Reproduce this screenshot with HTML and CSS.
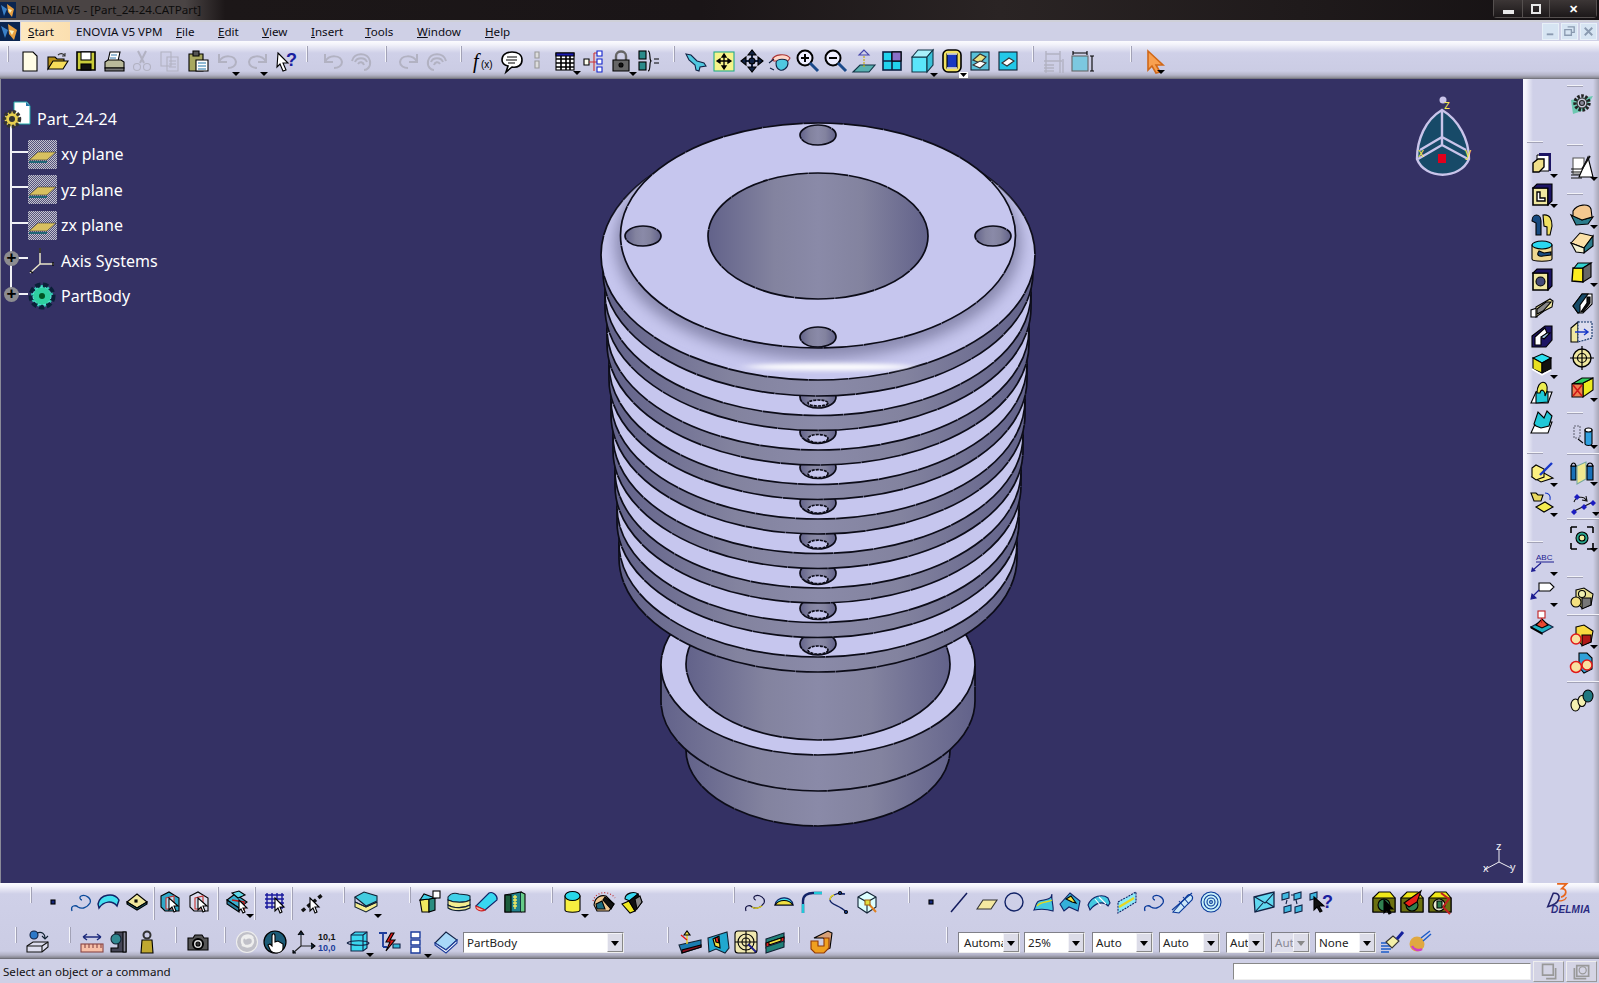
FILE: index.html
```html
<!DOCTYPE html>
<html lang="en">
<head>
<meta charset="utf-8">
<title>DELMIA V5 - [Part_24-24.CATPart]</title>
<link rel="stylesheet" href="styles.css">
</head>
<body>
<header class="titlebar">
  <svg class="appicon" viewBox="0 0 16 16"><rect width="16" height="16" fill="#0b2550"/><path d="M7 2l7 5-2 8-4-5z" fill="#e8a040" stroke="none"/><path d="M1 3l6 4-3 7z" fill="#3a80c8" stroke="none"/><path d="M8 7l4 1-2 3z" fill="#f8f0c0"/></svg>
  <span class="titlegloss">DELMIA V5 - [Part_24-24.CATPart]</span>
  <div class="winbtns">
    <span class="wb wbmin"><i></i></span>
    <span class="wb wbmax"><i></i></span>
    <span class="wb wbclose">✕</span>
  </div>
</header>
<nav class="menubar">
  <svg class="menuicon" viewBox="0 0 20 19"><rect width="20" height="19" fill="#0b2550"/><path d="M8 2l9 6-3 10-5-6z" fill="#e8a040" stroke="none"/><path d="M1 4l7 4-3 8z" fill="#3a80c8" stroke="none"/><path d="M9 8l5 1-2 4z" fill="#f8f0c0"/></svg>
  <span class="mi mstart"><u>S</u>tart</span>
  <span class="mi menovia">ENOVIA V5 VPM</span>
  <span class="mi mfile"><u>F</u>ile</span>
  <span class="mi medit"><u>E</u>dit</span>
  <span class="mi mview"><u>V</u>iew</span>
  <span class="mi minsert"><u>I</u>nsert</span>
  <span class="mi mtools"><u>T</u>ools</span>
  <span class="mi mwindow"><u>W</u>indow</span>
  <span class="mi mhelp"><u>H</u>elp</span>
  <div class="mdibtns">
    <span class="mdib"><svg viewBox="0 0 16 16"><path d="M4 11h7" stroke="#8a9ab0" stroke-width="2"/></svg></span>
    <span class="mdib"><svg viewBox="0 0 16 16"><path d="M6 3h7v6h-3M3 6h7v6H3z" stroke="#8a9ab0" stroke-width="1.400" fill="none"/></svg></span>
    <span class="mdib"><svg viewBox="0 0 16 16"><path d="M4 4l8 8M12 4l-8 8" stroke="#8a9ab0" stroke-width="2"/></svg></span>
  </div>
</nav>
<section class="toolbar-top">
  <i class="sep l0 r7"></i>
  <svg class="ic" viewBox="0 0 24 24"><path fill="#fffce6" d="M5 3h10l4 4v15H5z"/></svg>
  <svg class="ic" viewBox="0 0 24 24"><path fill="#b8921a" d="M2 20V8h7l2 2h7v3H7z"/><path fill="#f5dc5a" d="M2 20l5-8h15l-5 8z"/><path d="M12 6c2-2 5-2 7 1m0-3v3h-3" stroke="#333"/></svg>
  <svg class="ic" viewBox="0 0 24 24"><path fill="#c9cc3a" stroke-width="1.600" d="M3 3h18v18H3z"/><rect x="7" y="3" width="10" height="8" fill="#fff"/><rect x="7" y="15" width="10" height="6" fill="#111"/></svg>
  <svg class="ic" viewBox="0 0 24 24"><path fill="#fff" d="M8 3h10l-2 9H6z"/><path fill="#b9b99a" d="M3 13l3-2h13l3 2v6H3z"/><path fill="#777" d="M3 19h19v3H3z"/><path d="M9 6h6M8 9h6" stroke="#37a"/></svg>
  <svg class="ic dis" viewBox="0 0 24 24"><path d="M8 2l6 12M16 2l-6 12" stroke-width="2"/><circle cx="7" cy="18" r="3.500"/><circle cx="17" cy="18" r="3.500"/></svg>
  <svg class="ic dis" viewBox="0 0 24 24"><path d="M3 3h10v14H3z"/><path d="M9 8h11v14H9z"/><path d="M11 12h7M11 15h7M11 18h7"/></svg>
  <svg class="ic" viewBox="0 0 24 24"><path fill="#a8a860" d="M3 5h14v17H3z"/><path fill="#555" d="M7 2h6v5H7z"/><path fill="#fff" d="M10 11h12v11H10z"/><path d="M12 14h8M12 17h8M12 20h8" stroke="#27a"/></svg>
  <svg class="ic dis x1" viewBox="0 0 24 24"><path d="M4 5v8h8M4 13C8 5 20 6 21 13c0 4-4 6-8 6" stroke-width="2"/><path class="ar" d="M17 23h8l-4 4z"/></svg>
  <svg class="ic dis x3" viewBox="0 0 24 24"><path d="M20 5v8h-8M20 13C16 5 4 6 3 13c0 4 4 6 8 6" stroke-width="2"/><path class="ar" d="M14 23h8l-4 4z"/></svg>
  <svg class="ic" viewBox="0 0 24 24"><path fill="#fff" stroke="#000" d="M3 4l10 10H8l3 7-3 1-3-7-3 3z" transform="translate(1 0)"/><text class="qm" x="12" y="17">?</text></svg>
  <i class="sep l6 r11"></i>
  <svg class="ic dis" viewBox="0 0 24 24"><path d="M4 5v8h8M4 13C8 5 20 6 21 13c0 4-4 6-8 6" stroke-width="2"/></svg>
  <svg class="ic dis" viewBox="0 0 24 24"><path d="M3 12C5 3 19 3 21 12c1 6-3 9-6 9M6 13c2-5 10-5 12 0M9 15c2-3 5-2 6 1" stroke-width="2"/></svg>
  <i class="sep l10 r8"></i>
  <svg class="ic dis" viewBox="0 0 24 24"><path d="M20 5v8h-8M20 13C16 5 4 6 3 13c0 4 4 6 8 6" stroke-width="2"/></svg>
  <svg class="ic dis" viewBox="0 0 24 24"><path d="M21 12C19 3 5 3 3 12c-1 6 3 9 6 9M18 13c-2-5-10-5-12 0M15 15c-2-3-5-2-6 1" stroke-width="2"/></svg>
  <i class="sep l9 r8"></i>
  <svg class="ic" viewBox="0 0 24 24"><text class="fx" x="1" y="19">f</text><text class="fxs" x="9" y="19">(x)</text></svg>
  <svg class="ic" viewBox="0 0 24 24"><path fill="#fff" stroke-width="1.600" d="M12 3c6 0 10 3 10 8s-4 8-10 7l-6 5 2-6c-4-1-6-3-6-6 0-5 4-8 10-8z"/><path d="M7 8h10M6 11h11M8 14h7"/></svg>
  <svg class="ic x-3" viewBox="0 0 24 24"><path stroke="#999" fill="#ddd" d="M10 3h4v6h-4zM10 12h4v7h-4z"/></svg>
  <svg class="ic" viewBox="0 0 24 24"><rect x="3" y="4" width="18" height="17" fill="#fff"/><path d="M3 4h18v3H3z" fill="#1a1ab0"/><path d="M3 10h18M3 14h18M3 18h18M8 7v14M13 7v14M17 7v14" stroke-width="1.600"/><path class="ar" d="M20 22h8l-4 4z"/></svg>
  <svg class="ic" viewBox="0 0 24 24"><path d="M3 10h5v6H3z" fill="#ffe"/><path d="M8 13h5M13 4v18M13 4h3M13 13h3M13 22h0" stroke="#c33"/><g fill="#fff" stroke="#12c"><path d="M16 2h5v5h-5zM16 10h5v5h-5zM16 18h5v5h-5z"/></g></svg>
  <svg class="ic" viewBox="0 0 24 24"><path d="M7 11V7c0-6 10-6 10 0v4" stroke="#666" stroke-width="2.400"/><path fill="#666" d="M4 11h16v11H4z"/><circle cx="12" cy="16" r="2" fill="#111"/><path class="ar" d="M20 23h8l-4 4z"/></svg>
  <svg class="ic" viewBox="0 0 24 24"><rect x="2" y="2" width="7" height="8" fill="#2a8a8a"/><rect x="2" y="13" width="7" height="8" fill="#2a8a8a"/><path d="M11 2c3 0 1 9 3 10-2 1 0 10-3 10M17 10h5M17 14h5"/></svg>
  <i class="sep l10 r7"></i>
  <svg class="ic" viewBox="0 0 24 24"><path fill="#4fc8e0" stroke="#124" d="M2 5l5 1 6 6 7 2 2 3-6 1-1 4-3-1-1-5-6-5z"/></svg>
  <svg class="ic" viewBox="0 0 24 24"><rect x="2" y="3" width="20" height="19" fill="#f6f38a" stroke="#2a8"/><path d="M12 5v15M5 12h14M12 5l-2 3h4zM12 20l-2-3h4zM5 12l3-2v4zM19 12l-3-2v4z" stroke-width="1.300" fill="#000"/></svg>
  <svg class="ic" viewBox="0 0 24 24"><path d="M12 1v22M1 12h22" stroke="#124" stroke-width="2"/><path fill="#124" d="M12 1l-4 5h8zM12 23l-4-5h8zM1 12l5-4v8zM23 12l-5-4v8z"/><circle cx="12" cy="12" r="3" fill="#124"/></svg>
  <svg class="ic" viewBox="0 0 24 24"><path fill="#ffd6c8" stroke="#a33" d="M4 11c2-6 14-7 18-2l-2 3H6z"/><path fill="#4fc8e0" d="M8 14c0-5 12-5 12 0 0 5-5 8-8 7-3-1-4-4-4-7z" stroke="#124"/><path d="M1 14l5-4M2 19l4 2" stroke="#124"/></svg>
  <svg class="ic" viewBox="0 0 24 24"><circle cx="9" cy="9" r="7.500" fill="#eef" stroke-width="2"/><path d="M14 14l8 8" stroke="#1a4a8a" stroke-width="3"/><path d="M5 9h8M9 5v8" stroke-width="2"/></svg>
  <svg class="ic" viewBox="0 0 24 24"><circle cx="9" cy="9" r="7.500" fill="#eef" stroke-width="2"/><path d="M14 14l8 8" stroke="#1a4a8a" stroke-width="3"/><path d="M5 9h8" stroke-width="2"/></svg>
  <svg class="ic" viewBox="0 0 24 24"><path fill="#58b0b0" stroke="#134" d="M1 23l7-7h15l-6 7z"/><path d="M12 18V6" stroke="#c8b000" stroke-dasharray="2 1"/><path d="M12 1l-5 5h10z" fill="#cfd0e8" stroke="#44a"/></svg>
  <svg class="ic" viewBox="0 0 24 24"><rect x="3" y="3" width="18" height="18" fill="#22d4ee" stroke="#124" stroke-width="1.600"/><path d="M12 3v18M3 12h18" stroke="#124" stroke-width="1.600"/><rect x="12" y="3" width="9" height="9" fill="#8a70c8"/></svg>
  <svg class="ic x2" viewBox="0 0 24 24"><path fill="#5be6fa" stroke="#134" d="M2 8h15v15H2z"/><path fill="#a8f0fa" stroke="#134" d="M2 8l6-7h15l-6 7z"/><path fill="#38c0d8" stroke="#134" d="M17 8l6-7v15l-6 7z"/><path class="ar" d="M20 24h8l-4 4z"/></svg>
  <svg class="ic x2" viewBox="0 0 24 24"><rect x="3" y="1" width="18" height="22" rx="5" fill="#f0e060" stroke-width="1.600"/><rect x="7" y="5" width="10" height="14" fill="#1838c0"/><path d="M7 5h10M7 19h10" stroke="#eee" stroke-width="1.400"/><rect class="ar-bg" x="19" y="23" width="9" height="6"/><path class="ar" d="M20 24h7l-3.500 4z"/></svg>
  <svg class="ic" viewBox="0 0 24 24"><rect x="3" y="3" width="18" height="18" fill="#58c0d8" stroke="#123"/><path d="M5 11l7-6 6 3-6 6z" fill="#e8e080" stroke="#333"/><path d="M5 16l7-4 6 2-6 5z" fill="#fff" stroke="#333"/></svg>
  <svg class="ic" viewBox="0 0 24 24"><rect x="3" y="3" width="18" height="18" fill="#22c8e8" stroke="#123"/><path d="M6 14l7-5 5 3-7 5z" fill="#fff" stroke="#333"/></svg>
  <i class="sep l10 r6"></i>
  <svg class="ic dis" viewBox="0 0 24 24"><path d="M4 2v22M18 2v22M4 5h14M2 12h18M2 16h10M2 19h10M2 22h10M21 10v14" stroke-width="1.400"/></svg>
  <svg class="ic" viewBox="0 0 24 24"><path d="M3 2v4M17 2v4M3 4h14" /><rect x="2" y="7" width="16" height="15" fill="#7cc8e0" stroke="#666"/><path d="M22 7v15M20 7h4M20 22h4"/></svg>
  <i class="sep l34 r9"></i>
  <svg class="ic" viewBox="0 0 24 24"><path fill="#f8a050" stroke="#d06818" stroke-width="1.600" d="M5 2l15 14h-7l4 7-4 1-4-7-4 4z"/><path class="ar" d="M14 21h8l-4 4z"/></svg>
</section>
<div class="workarea">
  <main class="viewport">
    <svg class="model" viewBox="0 79 1523 804">
      <defs>
        <linearGradient id="wall"><stop offset="0" stop-color="#62628a"/><stop offset=".3" stop-color="#83839f"/><stop offset=".5" stop-color="#8a8aa8"/><stop offset=".7" stop-color="#83839f"/><stop offset="1" stop-color="#62628a"/></linearGradient>
        <clipPath id="filclip"><ellipse cx="818" cy="255" rx="217" ry="125"/></clipPath>
        <filter id="blur" x="-30%" y="-200%" width="160%" height="500%"><feGaussianBlur stdDeviation="8 2"/></filter>
        <filter id="shade" x="-10%" y="-10%" width="120%" height="120%"><feGaussianBlur stdDeviation="7"/></filter>
        <pattern id="chk" width="2" height="2" patternUnits="userSpaceOnUse"><rect width="2" height="2" fill="#c4c4ce"/><rect width="1" height="1" fill="#54527c"/><rect x="1" y="1" width="1" height="1" fill="#54527c"/></pattern>
      </defs>
      <g class="edges">
        <path class="w" d="M686 750a132 76 0 0 0 264 0V720H686z"/>
        <path class="w" d="M661 665v36a157 90 0 0 0 314 0V665z"/>
        <ellipse class="lt" cx="818" cy="665" rx="157" ry="90"/>
        <ellipse class="w" cx="818" cy="664" rx="132" ry="76"/>

        <path class="w" d="M619 543v15a199 114 0 0 0 398 0v-15z"/><ellipse class="lt" cx="818" cy="543" rx="199" ry="114"/>
        <ellipse class="w" cx="818" cy="643.800" rx="18" ry="11"/><ellipse class="lt dash" cx="818" cy="650" rx="10" ry="4"/>
        <path class="w" d="M617 507v15a201 115.500 0 0 0 402 0v-15z"/><ellipse class="lt" cx="818" cy="507" rx="201" ry="115.500"/>
        <ellipse class="w" cx="818" cy="608.500" rx="18" ry="11"/><ellipse class="lt dash" cx="818" cy="614.700" rx="10" ry="4"/>
        <path class="w" d="M615 471v15a203 117 0 0 0 406 0v-15z"/><ellipse class="lt" cx="818" cy="471" rx="203" ry="117"/>
        <ellipse class="w" cx="818" cy="573.300" rx="18" ry="11"/><ellipse class="lt dash" cx="818" cy="579.500" rx="10" ry="4"/>
        <path class="w" d="M613 435.500v15a205 118 0 0 0 410 0v-15z"/><ellipse class="lt" cx="818" cy="435.500" rx="205" ry="118"/>
        <ellipse class="w" cx="818" cy="538" rx="18" ry="11"/><ellipse class="lt dash" cx="818" cy="544.200" rx="10" ry="4"/>
        <path class="w" d="M611 400v15a207 119 0 0 0 414 0v-15z"/><ellipse class="lt" cx="818" cy="400" rx="207" ry="119"/>
        <ellipse class="w" cx="818" cy="502.800" rx="18" ry="11"/><ellipse class="lt dash" cx="818" cy="509" rx="10" ry="4"/>
        <path class="w" d="M609 364.500v15a209 120 0 0 0 418 0v-15z"/><ellipse class="lt" cx="818" cy="364.500" rx="209" ry="120"/>
        <ellipse class="w" cx="818" cy="467.500" rx="18" ry="11"/><ellipse class="lt dash" cx="818" cy="473.700" rx="10" ry="4"/>
        <path class="w" d="M607 329v15a211 121 0 0 0 422 0v-15z"/><ellipse class="lt" cx="818" cy="329" rx="211" ry="121"/>
        <ellipse class="w" cx="818" cy="432.300" rx="18" ry="11"/><ellipse class="lt dash" cx="818" cy="438.500" rx="10" ry="4"/>
        <path class="w" d="M605 293v15a213 122.500 0 0 0 426 0v-15z"/><ellipse class="lt" cx="818" cy="293" rx="213" ry="122.500"/>
        <ellipse class="w" cx="818" cy="397" rx="18" ry="11"/><ellipse class="lt dash" cx="818" cy="403" rx="10" ry="3"/>
        <path class="w" d="M603 257v15a215 124 0 0 0 430 0v-15z"/>

        <ellipse class="lt" cx="818" cy="255" rx="217" ry="125"/>
        <g clip-path="url(#filclip)" class="nostroke">
          <ellipse class="shade" cx="818" cy="243" rx="203" ry="116" filter="url(#shade)"/>
          <ellipse class="hl" cx="830" cy="367" rx="85" ry="3.500" filter="url(#blur)"/>
        </g>
        <ellipse class="lt" cx="818" cy="235.500" rx="197.500" ry="112.500"/>
        <ellipse class="w" cx="818" cy="236" rx="110" ry="63"/>
        <ellipse class="w" cx="818" cy="135" rx="18" ry="10"/>
        <ellipse class="w" cx="818" cy="337" rx="18" ry="10"/>
        <ellipse class="w" cx="643" cy="236" rx="18" ry="10"/>
        <ellipse class="w" cx="993" cy="236" rx="18" ry="10"/>
      </g>
      <g class="compass">
        <path class="cfill" d="M1442 110C1425 120 1417 140 1417 159 1425 180 1460 180 1469 159 1469 140 1459 120 1442 110z"/>
        <path d="M1442 110V145M1442 137L1420 150M1442 137L1466 150M1442 145L1418 159M1442 145L1468 159"/>
        <circle class="cball" cx="1443" cy="100" r="3.500"/>
        <rect class="cred" x="1438" y="154" width="8" height="9"/>
        <text class="clabel" x="1444" y="109">z</text>
        <text class="clabel" x="1418" y="157">x</text>
        <text class="clabel" x="1465" y="157">y</text>
      </g>
      <g class="triad">
        <path d="M1499 850V862L1484 870M1499 862L1511 868"/>
        <text x="1496" y="850">z</text><text x="1483" y="872">x</text><text x="1510" y="871">y</text>
      </g>
    </svg>
    <ul class="tree">
      <li class="node root">
        <svg class="rooticon" viewBox="0 0 30 30"><path d="M10 1h13l3 4v18H10z" fill="#fff" stroke="#2aa"/><path d="M22 1l4 4h-4z" fill="#27a"/><circle cx="8" cy="18" r="7.500" fill="#e8d050" stroke="#333" stroke-dasharray="3 1.500" stroke-width="3.500"/><circle cx="8" cy="18" r="3" fill="#333"/></svg>
        <span>Part_24-24</span>
      </li>
      <li class="node child">
        <svg class="planeicon" viewBox="0 0 29 29"><rect width="29" height="29" class="chk"/><path d="M1 20l9-8h18l-9 8z" fill="#d8c060" stroke="#333" stroke-width=".6"/><path d="M1 22h18" stroke="#267" stroke-width="2"/></svg>
        <span>xy plane</span>
      </li>
      <li class="node child">
        <svg class="planeicon" viewBox="0 0 29 29"><rect width="29" height="29" class="chk"/><path d="M1 20l9-8h18l-9 8z" fill="#d8c060" stroke="#333" stroke-width=".6"/><path d="M1 22h18" stroke="#267" stroke-width="2"/></svg>
        <span>yz plane</span>
      </li>
      <li class="node child">
        <svg class="planeicon" viewBox="0 0 29 29"><rect width="29" height="29" class="chk"/><path d="M1 20l9-8h18l-9 8z" fill="#d8c060" stroke="#333" stroke-width=".6"/><path d="M1 22h18" stroke="#267" stroke-width="2"/></svg>
        <span>zx plane</span>
      </li>
      <li class="node child exp">
        <svg class="planeicon" viewBox="0 0 29 29"><path d="M12 2V18L2 27M12 18H26" stroke="#e8e4c8" stroke-width="1.500" fill="none"/><path d="M12 2v5M25 16v4M2 25l3 2" stroke="#111" stroke-width="1.500"/></svg>
        <span>Axis Systems</span>
      </li>
      <li class="node child exp">
        <svg class="planeicon" viewBox="0 0 29 29"><circle cx="14" cy="14" r="11" fill="#32c8b4" stroke="#0a2038" stroke-width="5" stroke-dasharray="5 2.500"/><circle cx="14" cy="14" r="9" fill="#2fd0a0" stroke="#68e8e8" stroke-dasharray="3 2"/><circle cx="14" cy="14" r="3" fill="#052"/></svg>
        <span>PartBody</span>
      </li>
    </ul>
  </main>
  <aside class="rightbar">
    <div class="rcol rc1">
      <i class="hsep t62"></i>
      <svg class="ic t9" viewBox="0 0 24 24"><path fill="#fff" stroke-width="1" d="M7 3h12v16H7z"/><path fill="#1c1464" stroke="none" d="M9 1h12v18h-2V4H9z"/><path fill="#f0e08a" stroke-width="1.400" d="M3 11l5-4h6v8l-5 5H3z"/><path class="ar" d="M20 22h8l-4 4z"/></svg>
      <svg class="ic t6" viewBox="0 0 24 24"><path fill="#f0e8a0" stroke="#000" stroke-width="1.600" d="M3 6h15v17H3z"/><path fill="#1c1464" d="M3 6l4-4h15v17l-4 4V6z"/><path fill="#fff" stroke="#000" stroke-width="1.400" d="M7 10h3v6h5v3H7z"/><path class="ar" d="M20 22h8l-4 4z"/></svg>
      <svg class="ic t6" viewBox="0 0 24 24"><path fill="#164a80" stroke="#000" d="M2 9c0-8 9-8 9 0v14H6V11z"/><path fill="#f0e060" stroke="#000" d="M13 3c8-1 9 6 9 11l-2 9h-3v-8l-3-1z"/></svg>
      <svg class="ic t3" viewBox="0 0 24 24"><path fill="#f0d890" stroke="#000" d="M2 6v14c0 3 20 3 20 0V6z"/><ellipse cx="12" cy="6" rx="10" ry="4" fill="#2ad8f0" stroke="#000"/><path fill="#184a80" d="M9 12c-3 4 0 6 4 5l8-1v-3l-7 1z"/></svg>
      <svg class="ic t4" viewBox="0 0 24 24"><path fill="#f0e8a0" stroke="#000" stroke-width="1.600" d="M3 6h15v17H3z"/><path fill="#1c1464" d="M3 6l4-4h15v17l-4 4V6z"/><circle cx="10.500" cy="14.500" r="4.500" fill="#444a78" stroke="#000"/></svg>
      <svg class="ic t4" viewBox="0 0 24 24"><path fill="#fff" stroke="#000" d="M1 22v-7l6-2v9z"/><path fill="#f0e8a0" stroke="#000" d="M6 12L20 4l3 2-1 6-8 4-8 6z"/><path fill="#888" d="M7 14l9-7 5 0-8 9-6 3z"/></svg>
      <svg class="ic t5" viewBox="0 0 24 24"><path fill="#1c1464" stroke="#000" d="M2 12L15 2h7v14l-6 7H2z"/><path fill="#fff" stroke="#000" d="M5 13L15 4l2 5-6 5v7H5z"/><path fill="#a0c8e0" d="M11 13l6-4 3 0-6 6z"/></svg>
      <svg class="ic t4" viewBox="0 0 24 24"><path fill="#2ae0f0" stroke="#000" d="M12 2l9 4-9 5-9-5z"/><path fill="#e8e020" stroke="#000" d="M3 6l9 5v10l-9-4z"/><path fill="#111" d="M21 6l-9 5v10l9-4z"/><path d="M2 17l10 6 9-5" stroke="#fff" stroke-width="1.500"/><path class="ar" d="M20 23h8l-4 4z"/></svg>
      <svg class="ic t4" viewBox="0 0 24 24"><path fill="#fff" stroke="#000" d="M1 23l5-11h16l-4 11z"/><path fill="#20c8d8" stroke="#000" d="M6 12l5-2 7 2v10l-12 1z"/><path fill="#ecec50" stroke="#000" d="M7 13c0-14 12-14 10-2l-2 5c0-6-4-8-5-3z"/></svg>
      <svg class="ic t6" viewBox="0 0 24 24"><path fill="#fff" stroke="#000" d="M1 23l5-11h16l-4 11z"/><path fill="#20c8d8" stroke="#000" d="M4 14l4-12 6 6 3-7 5 5-3 10-8 2-5-2z"/></svg>
      <i class="hsep t18"></i>
      <svg class="ic t6" viewBox="0 0 24 24"><path fill="#fcf080" stroke="#000" d="M2 17l12-4 9 5-12 4z"/><path fill="#fcf080" stroke="#000" d="M2 8l4-3 8 4v8l-8 3-4-3z"/><path d="M10 15L22 3" stroke="#1838c8" stroke-width="2.400"/><path class="ar" d="M20 23h8l-4 4z"/></svg>
      <svg class="ic t6" viewBox="0 0 24 24"><path fill="#e8d860" stroke="#000" d="M1 3h5l2 2h5l-2 6H4z"/><path fill="#f4ec50" stroke="#000" d="M6 17l9-5 8 5-9 5z"/><path d="M15 3c4 0 6 3 5 7" stroke="#1838c8"/><path class="ar" d="M20 23h8l-4 4z"/></svg>
      <i class="hsep t27"></i>
      <svg class="ic t7" viewBox="0 0 24 24"><text class="abc" x="6" y="10">ABC</text><path d="M6 12h18M11 13l-8 7" stroke="#1c1c90"/><path d="M1 22l1-5 4 4z" fill="#1c1c90" stroke="none"/><path class="ar" d="M20 22h8l-4 4z"/></svg>
      <svg class="ic t6" viewBox="0 0 24 24"><path fill="#fff" stroke="#000" d="M9 3h11l4 4-4 4H9z"/><path d="M9 10l-6 6M1 19l1-5 4 4z" stroke="#1c1c90" fill="#1c1c90"/><path class="ar" d="M20 23h8l-4 4z"/></svg>
      <svg class="ic t6" viewBox="0 0 24 24"><path fill="#20b0c0" stroke="#124" d="M1 17l11-6 11 6-11 6z"/><path fill="#e84830" d="M6 15l6-6 6 6-6 3z"/><rect x="8" y="1" width="7" height="7" fill="#fff" stroke="#c02020"/><path d="M11.500 8v5" stroke="#c02020"/><path fill="#e8b060" d="M1 17l11 6v1l-11-6z"/></svg>
    </div>
    <div class="rcol rc2">
      <i class="hsep t6"></i>
      <svg class="ic t5" viewBox="0 0 24 24"><path fill="#6cc8b0" stroke="none" d="M1 8l22-4-8 14-12 4z"/><circle cx="12" cy="11" r="7" fill="none" stroke="#222" stroke-width="3.400" stroke-dasharray="2.500 1.500"/><circle cx="12" cy="11" r="5" fill="#ccd" stroke="#333"/><circle cx="12" cy="11" r="2.500" fill="#889" stroke="#222"/></svg>
      <i class="hsep t28"></i>
      <svg class="ic t9" viewBox="0 0 24 24"><path fill="#fff" stroke="#555" d="M3 3h11v16H3z"/><path d="M1 14h11M1 17h11M1 20h11M1 23h11" stroke="#111"/><path fill="#fff" stroke="#000" d="M18 2l5 20H9z"/><path d="M20 1l-8 13" stroke="#111" stroke-width="1.600"/><path class="ar" d="M20 22h8l-4 4z"/></svg>
      <i class="hsep t14"></i>
      <svg class="ic t8" viewBox="0 0 24 24"><path fill="#2c7c8c" stroke="#000" d="M1 12l5 10 12-1 5-7L12 17z"/><path fill="#f4c890" stroke="#000" d="M3 8c4-7 16-8 18-2l1 8-10 3-9-4z"/><path class="ar" d="M20 22h8l-4 4z"/></svg>
      <svg class="ic t4" viewBox="0 0 24 24"><path fill="#fce0a8" stroke="#000" d="M1 12l9-10 13 3-9 12z"/><path fill="#2c7c8c" stroke="#000" d="M14 17l9-12v10l-9 7z"/><path fill="#f4f0d0" stroke="#000" d="M1 12l13 5v5L6 21z"/></svg>
      <svg class="ic t6" viewBox="0 0 24 24"><path fill="#fcec20" stroke="#000" stroke-width="1.400" d="M3 7l10 0v14L2 20z"/><path fill="#30d0d0" stroke="#000" d="M4 7l4-5h13l-8 5z"/><path fill="#666" stroke="#000" d="M13 7l8-5v14l-8 5z"/><path class="ar" d="M20 22h8l-4 4z"/></svg>
      <svg class="ic t6" viewBox="0 0 24 24"><path fill="#fff" stroke="#000" d="M3 15L12 3h10v10l-9 9H8z"/><path fill="#164a68" stroke="#000" d="M3 15L12 3h6l-8 11 0 7-2 1z"/><path fill="#111" d="M17 6l3 0 0 6-7 9-2 0 6-9z"/></svg>
      <svg class="ic t5" viewBox="0 0 24 24"><path fill="#f0e8a0" stroke="#000" d="M1 8l7-6v20l-7 0z"/><path fill="#dde" stroke="#136" stroke-dasharray="2 1" d="M8 2h14v16l-14 4z"/><path d="M5 12h13M14 9l4 3-4 3" stroke="#1838c8" stroke-width="1.400"/></svg>
      <svg class="ic t2" viewBox="0 0 24 24"><circle cx="12" cy="12" r="9" fill="#f0e8a0" stroke-width="1.400"/><circle cx="12" cy="12" r="4.500" stroke-width="1.200"/><path d="M12 0v24M0 12h24" stroke-width="1.200"/></svg>
      <svg class="ic t6" viewBox="0 0 24 24"><path fill="#ecec20" stroke="#000" d="M13 7l10-5v12L13 21z"/><path fill="#30d060" stroke="#000" d="M2 8l10-6h11l-10 5z"/><path fill="#f08050" stroke="#000" d="M2 8h11v13H2z"/><path d="M3 9l9 11M12 9l-9 11" stroke="#d01818" stroke-width="1.600"/><path class="ar" d="M20 22h8l-4 4z"/></svg>
      <i class="hsep t12"></i>
      <svg class="ic t9" viewBox="0 0 24 24"><path fill="none" stroke="#667" stroke-dasharray="2 1" d="M4 3h6v12H4z"/><path d="M8 16l5 4" stroke="#000"/><path fill="#30a0e0" stroke="#000" d="M15 7h7v14c-1 2-6 2-7 0z"/><ellipse cx="18.500" cy="7" rx="3.500" ry="2" fill="#fff" stroke="#000"/><path class="ar" d="M20 22h8l-4 4z"/></svg>
      <i class="hsep full t6"></i>
      <svg class="ic t5" viewBox="0 0 24 24"><path fill="#1870b8" stroke="#000" d="M1 6h5v14H1z"/><path fill="#f0e890" stroke="#78a8a0" d="M7 6l9-4v17l-9 5z"/><path fill="#1870b8" stroke="#000" d="M17 6h6v14h-6z"/><path fill="#cce" d="M1 6c1-4 4-4 5 0zM17 6c1-4 5-4 6 0z"/><path class="ar" d="M20 22h8l-4 4z"/></svg>
      <svg class="ic t6" viewBox="0 0 24 24"><path d="M2 22l19-9M4 12c2-6 10-6 12-2M16 6l1 5-5-1" stroke="#111"/><g fill="#1c1cc0" stroke="none"><path d="M1 22l3-3 3 3-3 3zM11 17l3-3 3 3-3 3zM20 13l3-3 3 3-3 3zM4 7l3-3 3 3-3 3z"/></g><path class="ar" d="M22 22h8l-4 4z"/></svg>
      <i class="hsep full t4"></i>
      <svg class="ic t6" viewBox="0 0 24 24"><circle cx="12" cy="12" r="6" fill="#28a890" stroke="#000"/><circle cx="12" cy="12" r="3" fill="#f0f0a0"/><path d="M1 1h6M1 1v6M23 1h-6M23 1v6M1 23h6M1 23v-6M23 23h-6M23 23v-6" stroke-width="1.600"/><path class="ar" d="M20 22h8l-4 4z"/></svg>
      <i class="hsep t26"></i>
      <svg class="ic t8" viewBox="0 0 24 24"><path fill="#e8e090" stroke="#000" d="M6 4l8-2 9 6-2 11-9 3-6-7z"/><path fill="#777" d="M12 12h9v7l-9 4z"/><circle cx="6" cy="16" r="5" fill="#f4e080" stroke="#000"/><circle cx="12" cy="8" r="3.500" fill="#f0f0b0" stroke="#000"/></svg>
      <i class="hsep full t4"></i>
      <svg class="ic t7" viewBox="0 0 24 24"><path fill="#f8d840" stroke="#000" d="M6 4l8-2 9 6-2 11-9 3-6-7z"/><path fill="#b01818" d="M12 12h9v7l-9 4z"/><circle cx="6" cy="16" r="5" fill="#f8e0a0" stroke="#e01818" stroke-width="1.500"/><path class="ar" d="M20 22h8l-4 4z"/></svg>
      <svg class="ic t4" viewBox="0 0 24 24"><path fill="#30a0d8" stroke="#000" d="M9 2h8l5 5v11l-8 4-5-6z"/><circle cx="6" cy="16" r="5.500" fill="#f8e0a0" stroke="#e01818" stroke-width="1.500"/><circle cx="17" cy="14" r="5" fill="#f8e0a0" stroke="#e01818" stroke-width="1.500"/></svg>
      <i class="hsep full t6"></i>
      <svg class="ic t5" viewBox="0 0 24 24"><ellipse cx="5.500" cy="17" rx="4.500" ry="6" fill="#f4f0b0"/><ellipse cx="12" cy="13" rx="4" ry="5.500" fill="#f4f0b0"/><ellipse cx="18" cy="8" rx="5" ry="6" fill="#207880"/></svg>
    </div>
  </aside>
</div>
<section class="toolbar-bottom">
  <div class="trow trow1">
    <i class="sep l30 r7"></i>
    <svg class="ic" viewBox="0 0 24 24"><rect x="10" y="10" width="4" height="4" fill="#14287c"/></svg>
    <svg class="ic x1" viewBox="0 0 24 24"><path d="M2 21c-2-6 4-6 6-4 3 2 8 2 12-4 2-5-5-9-9-7-2 1-1 4 1 4" stroke="#0a4a9a" stroke-width="1.300"/></svg>
    <svg class="ic x-2" viewBox="0 0 24 24"><path fill="#44e0f0" stroke="#126" stroke-width="1.400" d="M2 14C4 4 18 2 23 10l-2 6C16 10 8 11 3 18z"/></svg>
    <svg class="ic x1" viewBox="0 0 24 24"><path fill="#f0e89c" stroke="#000" d="M2 12l10-8 10 8-10 6z"/><path fill="#2a7c8c" stroke="#000" d="M2 12l10 6 10-6v2l-10 6-10-6z"/><rect x="10" y="10" width="2" height="2" fill="#333"/></svg>
    <i class="sep tall l2 r2"></i>
    <svg class="ic" viewBox="0 0 24 24"><path fill="#30a8c8" stroke="#000" d="M2 6l8-4 10 6v13H6L2 17z"/><path fill="#bde" stroke="#c83030" d="M7 8l8-2v13H7z"/><path fill="#fff" stroke="#000" d="M10 8l9 8h-4l2 5-2 1-2-5-3 3z"/></svg>
    <svg class="ic x1" viewBox="0 0 24 24"><path fill="#dde" stroke="#000" d="M2 6l8-4 10 6v13H6L2 17z"/><path fill="#cde" stroke="#c83030" d="M7 8l8-2v13H7z"/><path fill="#fff" stroke="#000" d="M10 8l9 8h-4l2 5-2 1-2-5-3 3z"/></svg>
    <i class="sep tall l3 r5"></i>
    <svg class="ic" viewBox="0 0 24 24"><path fill="#38b0d0" stroke="#000" d="M1 10l8-6 12 8-8 6z"/><path fill="#60d8e8" stroke="#000" d="M6 3l7-2 6 4-7 3z"/><path fill="#2a7c9c" stroke="#000" d="M1 10v4l12 8v-4z"/><path d="M6 10l12 2v9" stroke="#c01818" stroke-width="1.500"/><path fill="#fff" stroke="#000" d="M13 10l8 8h-4l2 4-2 1-2-4-2 2z"/><path class="ar" d="M20 24h8l-4 4z"/></svg>
    <i class="sep tall l2 r5"></i>
    <svg class="ic" viewBox="0 0 24 24"><path d="M4 3v16M9 3v16M14 3v16M19 3v16M2 5h19M2 9h19M2 13h19M2 17h19" stroke="#18189c" stroke-width="1.400"/><path fill="#fff" stroke="#000" d="M12 8l9 9h-4l2 5-2 1-2-5-3 3z"/></svg>
    <i class="sep tall l2 r5"></i>
    <svg class="ic" viewBox="0 0 24 24"><path d="M2 21L22 5" stroke="#111" stroke-width="3.500" stroke-dasharray="4 3"/><path fill="#fff" stroke="#000" d="M10 8l9 9h-4l2 5-2 1-2-5-3 3z"/></svg>
    <i class="sep l17 r7"></i>
    <svg class="ic" viewBox="0 0 24 24"><path fill="#44cce0" stroke="#123" d="M1 7l9-5 13 4v5L12 16z"/><path fill="#f4ec90" stroke="#123" d="M1 7v5l11 5 11-5v4L12 22 1 17z"/><path d="M1 12l11 5 11-5" stroke="#123" /><path class="ar" d="M20 24h8l-4 4z"/></svg>
    <i class="sep l29 r5"></i>
    <svg class="ic" viewBox="0 0 24 24"><path fill="#f0e860" stroke="#000" d="M2 10l9-1v13H4z"/><path fill="#2a8c80" stroke="#000" d="M11 9l6-1v12l-6 2z"/><path fill="#40d0e8" stroke="#000" d="M2 10l4-6 11 4-6 1z"/><rect x="15" y="1" width="7" height="7" fill="#fff" stroke="#000"/></svg>
    <svg class="ic x1" viewBox="0 0 24 24"><path fill="#40d0e8" stroke="#123" d="M1 7c3-4 8-4 11-3 4 1 8 0 11 2v4c-5 3-16 3-22 0z"/><path fill="#f4ec90" stroke="#123" d="M1 10c6 3 17 3 22 0v5c-5 3-16 4-22 0z"/><path fill="#f4ec90" stroke="#123" d="M1 15c6 4 17 3 22 0v3c-5 3-16 4-22 0z"/></svg>
    <svg class="ic" viewBox="0 0 24 24"><path fill="#38d8f0" stroke="#126" d="M1 16L14 3c4-2 9 3 8 7L10 20z"/><path fill="#f8b0a0" stroke="#d02020" d="M1 16c-1 4 5 6 9 4z"/></svg>
    <svg class="ic" viewBox="0 0 24 24"><path fill="#20808c" stroke="#000" d="M2 5l16-3v20H2z"/><path fill="#1c5c3c" d="M2 5h6v17H2z"/><path d="M18 2l4 2v18l-4 0" fill="#6c8" stroke="#000"/><path d="M12 5v14M10 7h4M10 10h4M10 13h4M10 16h4" stroke="#f0e860" stroke-width="1.400"/></svg>
    <i class="sep l22 r6"></i>
    <svg class="ic" viewBox="0 0 24 24"><path fill="#f8f040" stroke="#000" d="M4 6v14c0 3 15 3 15 0V6z"/><ellipse cx="11.500" cy="6" rx="7.500" ry="4.500" fill="#28d8e8" stroke="#000"/><path class="ar" d="M20 24h8l-4 4z"/></svg>
    <svg class="ic x3" viewBox="0 0 24 24"><path fill="#f0c890" stroke="#000" d="M2 15c1-9 8-10 12-9l8 8-5 7H5z"/><path fill="#1c6c80" d="M4 14l6-3 3 8H5z"/><path fill="#111" d="M13 7l9 7-3 5-8-9z"/><path stroke="#c02020" stroke-dasharray="1 2" d="M1 11C4 1 17 0 23 8"/></svg>
    <svg class="ic" viewBox="0 0 24 24"><path fill="#f0e820" stroke="#000" d="M2 14l7-3 6 10-5 2z"/><path fill="#38d8f0" stroke="#000" d="M5 9c0-6 9-8 13-5l-8 7z"/><path fill="#111" d="M9 11l9-7 4 8-7 9z"/><path fill="#888" d="M15 9l5-3 2 6-5 7z"/></svg>
    <i class="sep l87 r7"></i>
    <svg class="ic" viewBox="0 0 24 24"><path d="M2 21c-2-6 4-6 6-4 3 2 8 2 12-4 2-5-5-9-9-7-2 1-1 4 1 4" stroke="#141444" stroke-width="1.200"/><path d="M8 17c3 2 6 2 10-1" stroke="#d8c820" stroke-width="1.400"/></svg>
    <svg class="ic" viewBox="0 0 24 24"><path fill="#44e0f0" stroke="#126" d="M3 15C4 6 20 5 21 15z"/><path fill="#f0e040" d="M3 15c4-6 14-6 18 0z"/></svg>
    <svg class="ic" viewBox="0 0 24 24"><path d="M3 23V11C3 5 8 3 13 3h9" stroke="#126" stroke-width="2.400"/><path d="M3 23V14" stroke="#20c8d8" stroke-width="2.400"/><path d="M14 3h8" stroke="#20c8d8" stroke-width="2.400"/></svg>
    <svg class="ic" viewBox="0 0 24 24"><path d="M17 4C9 2 2 6 2 10c0 5 10 5 16 12M17 4l-4 0" stroke="#126" stroke-width="1.300"/><path d="M2 10c0-4 2-4 4-5" stroke="#e0d020" stroke-width="1.400"/><circle cx="12" cy="3" r="1.500" fill="#14a"/><circle cx="18" cy="22" r="1.500" fill="#14a"/></svg>
    <svg class="ic x-1" viewBox="0 0 24 24"><path fill="#dff" stroke="#123" d="M3 7l9-5 9 5v10l-9 6-9-6z"/><path d="M3 7l9 5 9-5M12 12v11" stroke="#123"/><path d="M12 12l9 10" stroke="#e08020" stroke-width="2"/><path fill="#e0e040" d="M10 10h5v5h-5z" stroke="#a06010"/></svg>
    <i class="sep l27 r7"></i>
    <svg class="ic" viewBox="0 0 24 24"><rect x="10" y="10" width="4" height="4" fill="#14287c"/></svg>
    <svg class="ic" viewBox="0 0 24 24"><path d="M4 22L20 3" stroke="#121a5c" stroke-width="1.500"/></svg>
    <svg class="ic" viewBox="0 0 24 24"><path fill="#f4e8a0" stroke="#333" d="M2 19L8 10h14l-6 9z"/></svg>
    <svg class="ic x-1" viewBox="0 0 24 24"><circle cx="12" cy="12" r="9" fill="none" stroke="#126" stroke-width="1.400"/></svg>
    <svg class="ic x1" viewBox="0 0 24 24"><path fill="#44c8e0" stroke="#126" d="M3 20C5 16 5 12 8 11c5-2 12 0 13-7-1 6 2 13 1 17-6-2-14-2-19-1z"/><path d="M6 16c4-5 10-3 15-6" stroke="#e0d820" stroke-width="1.400"/></svg>
    <svg class="ic x-1" viewBox="0 0 24 24"><path fill="#34b0d8" stroke="#126" d="M2 14L12 3l10 8-2 10-9-4-5 4z"/><path fill="#f0e040" d="M8 9l5-3 5 7-4-1z"/></svg>
    <svg class="ic x1" viewBox="0 0 24 24"><path fill="#44c8e0" stroke="#126" d="M1 15C5 5 16 4 21 8l2 5-2 3C17 11 9 12 3 20z"/><path d="M8 9l6 7M12 7l7 7" stroke="#fff"/></svg>
    <svg class="ic" viewBox="0 0 24 24"><path fill="#8ce8f8" stroke="#126" stroke-dasharray="2 1" d="M3 12L21 2v10L3 23z"/><path d="M4 17L19 8" stroke="#e8d820" stroke-width="2.200"/></svg>
    <svg class="ic" viewBox="0 0 24 24"><path d="M2 21c-2-6 4-6 6-4 3 2 8 2 12-4 2-5-5-9-9-7-2 1-1 4 1 4" stroke="#0a3a9a" stroke-width="1.300"/></svg>
    <svg class="ic" viewBox="0 0 24 24"><path fill="#cce8f8" stroke="#0a3a9a" d="M2 22L16 6c3-3 7 0 5 4L8 23z"/><path d="M1 20L21 3" stroke="#0a3a9a"/><path d="M8 11l6 7M12 7l6 7" stroke="#0a3a9a"/></svg>
    <svg class="ic" viewBox="0 0 24 24"><circle cx="12" cy="12" r="10" fill="#c8f0f8" stroke="#0a3a9a"/><circle cx="12" cy="12" r="7" stroke="#0a3a9a"/><circle cx="12" cy="12" r="4" stroke="#0a3a9a"/><circle cx="12" cy="12" r="1.400" stroke="#0a3a9a"/></svg>
    <i class="sep l16 r7"></i>
    <svg class="ic" viewBox="0 0 24 24"><path fill="#60d8f0" stroke="#124" stroke-width="1.300" d="M2 7L22 2v15L3 22z"/><path d="M3 7l10 6 9-10M3 22l8-9M14 12l8 5" stroke="#124"/></svg>
    <svg class="ic" viewBox="0 0 24 24"><g fill="#40b8e0" stroke="#124"><path d="M2 4l7-2v6l-7 2z"/><path d="M14 4l7-2v6l-7 2z"/><path d="M4 17l7-2v6l-7 2z"/><path d="M15 17l7-2v6l-7 2z"/></g><path d="M11 5h3M7 10l-1 4M16 10l1 4" stroke="#124"/></svg>
    <svg class="ic x1" viewBox="0 0 24 24"><path fill="#40b8e0" stroke="#124" d="M1 4l7-2v6l-7 2z"/><path fill="#111" d="M5 7l10 9H10l3 5-2 1-3-5-3 3z"/><text class="qm" x="13" y="18">?</text></svg>
    <i class="sep l26 r7"></i>
    <svg class="ic" viewBox="0 0 24 24"><path fill="#f0e818" stroke="#000" d="M1 8l6-6h11l5 6v14H1z"/><path fill="#6c7010" stroke="#000" d="M1 8h22v14H1z"/><circle cx="12" cy="15" r="6" fill="#308050" stroke="#000"/><path fill="#000" d="M12 10l9 9h-4l2 4-2 1-2-4-3 3z"/></svg>
    <svg class="ic" viewBox="0 0 24 24"><path fill="#f0e818" stroke="#000" d="M1 8l6-6h11l5 6v14H1z"/><path fill="#6c7010" stroke="#000" d="M1 8h22v14H1z"/><circle cx="12" cy="15" r="6" fill="#308050" stroke="#000"/><path fill="#e82018" d="M4 13L21 1l-4 11-8 5z"/></svg>
    <svg class="ic" viewBox="0 0 24 24"><path fill="#f0e818" stroke="#000" d="M1 8l6-6h11l5 6v14H1z"/><path fill="#6c7010" stroke="#000" d="M1 8h22v14H1z"/><circle cx="11" cy="15" r="6" fill="#e8e8d0" stroke="#000"/><path stroke="#c02020" stroke-width="2" d="M13 3l8 6-6 8 7 7"/><path fill="#308050" d="M9 11h5v7H9z"/></svg>
    <div class="logo">
      <svg class="logomark" viewBox="0 0 46 34"><path d="M18 1h12l-6 6c7 0 7 8-1 11" fill="none" stroke="#e8661c" stroke-width="2.200"/><path d="M30 18c-2 5-9 5-12 4" fill="none" stroke="#e8661c" stroke-width="1.600"/><path d="M6 30L13 13c11-2 11 13-7 17z" fill="none" stroke="#24246c" stroke-width="2"/></svg>
      <span>DELMIA</span>
    </div>
  </div>
  <div class="trow">
    <i class="sep l15 r7"></i>
    <svg class="ic" viewBox="0 0 24 24"><circle cx="8" cy="5" r="4" fill="#2c78c8" stroke="#124"/><path d="M11 3c5-2 8 1 8 5M16 6l3 3 3-3" stroke="#123"/><path fill="#dde" stroke="#111" d="M1 16l6-4h15v5l-6 5H1z"/><path d="M1 16h15v6M16 16l6-4" stroke="#111"/></svg>
    <i class="sep l17 r7"></i>
    <svg class="ic" viewBox="0 0 24 24"><path d="M3 7h18M3 7l4-3M3 7l4 3M21 7l-4-3M21 7l-4 3" stroke="#1c2a7c" stroke-width="1.400"/><rect x="1" y="14" width="22" height="8" fill="#f8c0a8" stroke="#844"/><path d="M5 14v4M9 14v4M13 14v4M17 14v4M21 14v4" stroke="#844"/></svg>
    <svg class="ic" viewBox="0 0 24 24"><path fill="#445" stroke="#000" d="M7 2h11v20H3v-4h7v-5H7z"/><circle cx="8" cy="9" r="5" fill="#308890" stroke="#123"/><path fill="#889" d="M15 2h3v20h-3z"/></svg>
    <svg class="ic x-1" viewBox="0 0 24 24"><path fill="#c0a830" stroke="#000" d="M7 10h10l1 13H6z"/><circle cx="12" cy="5" r="3.500" stroke="#333" stroke-width="2"/></svg>
    <i class="sep l14 r7"></i>
    <svg class="ic" viewBox="0 0 24 24"><path fill="#555" stroke="#000" d="M2 8h5l2-3h7l2 3h4v12H2z"/><circle cx="12" cy="14" r="5" fill="#ddd" stroke="#000" stroke-width="2"/><circle cx="12" cy="14" r="2" fill="#333"/></svg>
    <i class="sep l12 r7"></i>
    <svg class="ic" viewBox="0 0 24 24"><circle cx="12" cy="12" r="10.500" fill="#c0c0c8" stroke="#eee"/><path d="M18 8c-3-4-11-3-11 3 0 5 5 7 10 4M7 15c4 2 11 1 11-4 0-4-5-5-8-2" fill="none" stroke="#eee" stroke-width="2.400"/></svg>
    <svg class="ic" viewBox="0 0 24 24"><circle cx="12" cy="12" r="11" fill="#1c5c78" stroke-width="1.200"/><path fill="#fff" stroke="#000" d="M9 6c0-3 3-3 3 0v6l3-1 5 3v4c0 3-3 5-7 5-5 0-6-3-8-8l2-1 2 2z"/></svg>
    <svg class="ic" viewBox="0 0 24 24"><path d="M10 16V3M10 16H22M10 16L2 23" stroke="#222" stroke-width="1.100"/><path d="M7 5l3-4 3 4M20 13l4 3-4 3M2 20l0 3 3 0" fill="#123"/></svg>
    <svg class="ic x-1" viewBox="0 0 24 24"><text class="num" x="0" y="10">10,1</text><text class="num numb" x="0" y="21">10,0</text></svg>
    <svg class="ic" viewBox="0 0 24 24"><path fill="#3cd8f0" stroke="#124" d="M5 5l4-3h12v16l-4 3H5z"/><path d="M5 5h12v16M17 5l4-3M1 13c4-3 20-3 22 0-1 3-18 3-22 0" stroke="#124"/><path class="ar" d="M20 23h8l-4 4z"/></svg>
    <svg class="ic x3" viewBox="0 0 24 24"><path d="M2 3h8M6 3v14M6 17h4" stroke="#1c3c9c" stroke-width="1.800"/><path fill="#e01818" d="M14 3l-5 9h4l-4 9 9-11h-5l4-7z"/><path fill="#34b8d8" stroke="#124" d="M16 14h7v4h-7z"/></svg>
    <svg class="ic x-1" viewBox="0 0 24 24"><path fill="#fff" stroke="#1c3c9c" stroke-width="1.400" d="M7 2h9v6H7zM7 10h9v5H7zM7 17h9v6H7z"/><path class="ar" d="M20 24h8l-4 4z"/></svg>
    <svg class="ic x2" viewBox="0 0 24 24"><path fill="#a8d8f8" stroke="#124" d="M1 13L12 2l11 8-11 10z"/><path fill="#fff" stroke="#1c3c9c" d="M1 15l11 8 11-10v-3L12 20 1 13z"/></svg>
    <div class="combo wbody l3"><span>PartBody</span><b></b></div>
    <i class="sep l43 r7"></i>
    <svg class="ic" viewBox="0 0 24 24"><path fill="#1c7cb0" stroke="#123" d="M1 15l22-5v7L4 23z"/><path fill="#8c1020" d="M4 23l19-6v-2L4 20z"/><path d="M9 14V5" stroke="#e8d020" stroke-width="1.400"/><path d="M9 10L3 5" stroke="#e01818" stroke-width="1.400"/><path d="M6 5l3-4 3 4z" fill="#f0e040"/></svg>
    <svg class="ic" viewBox="0 0 24 24"><path fill="#20a8d0" stroke="#123" d="M2 8l19-6 2 16-4 5-9-4-7 3z"/><path fill="#f0e040" d="M7 9l6-3 1 12-5-2z"/><path fill="#e02020" d="M9 8l3-1 1 6-3-1z"/></svg>
    <svg class="ic" viewBox="0 0 24 24"><rect x="1" y="1" width="22" height="22" rx="3" fill="#f0e8b0"/><circle cx="12" cy="12" r="8"/><circle cx="12" cy="12" r="4"/><path d="M12 1v22M1 12h22"/><path d="M14 14l8 8" stroke="#20208c" stroke-width="2"/></svg>
    <svg class="ic x1" viewBox="0 0 24 24"><path fill="#208078" stroke="#123" d="M3 9l18-6v6L3 15z"/><path fill="#e02020" d="M3 13l18-6v5L3 18z"/><path fill="#f0e040" d="M6 12l12-4v3L6 15z"/><path fill="#208078" stroke="#123" d="M3 17l18-6v6L3 23z"/></svg>
    <i class="sep l9 r7"></i>
    <svg class="ic" viewBox="0 0 24 24"><path fill="#d8a078" d="M5 8l14-7 4 2-2 15-5 2V9l-2-1z"/><path fill="#f0a020" stroke="#903808" d="M2 11h7v5h6V8h5v10l-5 5H6l-4-4z"/></svg>
    <i class="sep l111 r10"></i>
    <div class="combo wauto1"><span>Automa</span><b></b></div>
    <div class="combo wn l4"><span>25%</span><b></b></div>
    <div class="combo wn l7"><span>Auto</span><b></b></div>
    <div class="combo wn l6"><span>Auto</span><b></b></div>
    <div class="combo ws l6"><span>Aut</span><b></b></div>
    <div class="combo ws dimmed l6"><span>Aut</span><b></b></div>
    <div class="combo wn l5"><span>None</span><b></b></div>
    <svg class="ic b2" viewBox="0 0 24 24"><path d="M1 13h14M1 16h12M1 19h10M1 22h8" stroke="#1c5cc8" stroke-width="1.500"/><path fill="#f4f0a8" stroke="#333" d="M6 12l7-6 6 5-7 7z"/><path d="M17 9l6-7" stroke="#14209c" stroke-width="3"/></svg>
    <svg class="ic" viewBox="0 0 24 24"><circle cx="9" cy="14" r="7.500" fill="#e0a840" stroke="none"/><path d="M4 16a7 7 0 0 0 10 3" stroke="#d040c0" stroke-width="2.400"/><path d="M13 8l9-7M15 11l8-7" stroke="#1c5cc8" stroke-width="1.500"/></svg>
  </div>
</section>
<footer class="statusbar">
  <span class="stext">Select an object or a command</span>
  <input class="sinput" type="text" aria-label="Command">
  <span class="sbtn"><svg viewBox="0 0 20 16"><path d="M5 2h9v9H5zM16 5v9H8" fill="none" stroke="#999" stroke-width="1.400"/></svg></span>
  <span class="sbtn"><svg viewBox="0 0 20 16"><path d="M6 3h10v9H6zM4 5v9h10" fill="none" stroke="#999" stroke-width="1.400"/><circle cx="11" cy="7" r="3" fill="none" stroke="#999"/></svg></span>
</footer>
</body>
</html>
```

FILE: styles.css
```css
* { box-sizing: border-box; }
html, body { margin: 0; padding: 0; }
body {
  width: 1599px; height: 983px; overflow: hidden;
  display: flex; flex-direction: column;
  font-family: "Noto Sans", "Open Sans", sans-serif;
  font-size: 11.600px; color: #111; background: #cfd0e6;
}
i, b { display: block; font-style: normal; }

.titlebar {
  height: 22px; flex: none; display: flex; align-items: flex-start; position: relative;
  background: linear-gradient(90deg, #4a4444 0, #4a4444 185px, #1c1718 225px, #1a1517 700px, #2a2424 1000px, #141012 1599px);
  border-bottom: 2px solid #cfd0d8;
}
.appicon { width: 16px; height: 16px; margin: 2px 0 0 0; flex: none; }
.titlegloss { margin-left: 5px; margin-top: 1px; font-size: 11.600px; color: #0c0c0c; line-height: 18px; }
.winbtns { margin-left: auto; margin-right: 2px; display: flex; height: 18px; border: 1px solid #55504f; border-top: 0; border-radius: 0 0 4px 4px; }
.wb { display: flex; align-items: center; justify-content: center; color: #fff; height: 17px; border-right: 1px solid #55504f; background: linear-gradient(#3c3636, #1c1819); }
.wbmin { width: 29px; }
.wbmin i { width: 11px; height: 4px; background: #e8e8e8; margin-top: 6px; }
.wbmax { width: 27px; }
.wbmax i { width: 10px; height: 10px; border: 2px solid #e8e8e8; }
.wbclose { width: 46px; font-size: 11px; font-weight: 700; border-right: 0; }

.menubar { height: 19px; flex: none; display: flex; align-items: center; position: relative; background: #cfd0e6; }
.menuicon { width: 20px; height: 19px; flex: none; }
.mi { line-height: 19px; height: 19px; font-size: 11.600px; color: #0c0c14; white-space: nowrap; }
.mstart { width: 49px; padding-left: 7px; background: linear-gradient(90deg, #fde8c0, #fbdfb0); margin-left: 1px; }
.menovia { margin-left: 6px; width: 100px; }
.mfile { width: 42px; }
.medit { width: 44px; }
.mview { width: 49px; }
.minsert { width: 54px; }
.mtools { width: 52px; }
.mwindow { width: 68px; }
.mdibtns { margin-left: auto; margin-right: 2px; display: flex; gap: 2px; }
.mdib { width: 17px; height: 17px; background: #d6e4f2; border: 1px solid #e8f0f8; display: block; }
.mdib svg { display: block; width: 100%; height: 100%; }

.toolbar-top {
  height: 38px; flex: none; display: flex; align-items: flex-start; padding: 8px 0 0 7px;
  background: linear-gradient(#fbfbfe 0, #f4f4fb 3px, #cfd0e8 12px, #cbcce4 30px, #b4b4c8 34px, #8a8a94 37px, #63636c 38px);
}
.ic { width: 24px; height: 24px; margin: 0 2px; flex: none; overflow: visible; fill: none; stroke: #000; stroke-width: 1.100; display: block; }
.ic.dis { stroke: #b2b2c2; }
.ic.dis path, .ic.dis circle { fill: none; }
.ar, .ic.dis path.ar { fill: #000; stroke: none; }
.ar-bg { fill: #fff; stroke: none; }
.qm { font: 700 18px "Liberation Sans", sans-serif; fill: #1a20a0; stroke: none; }
.fx { font: italic 20px "Liberation Serif", serif; fill: #000; stroke: none; }
.fxs { font: 10px "Liberation Sans", sans-serif; fill: #000; stroke: none; }
.num { font: 700 9px "Liberation Sans", sans-serif; fill: #111; stroke: none; }
.numb { fill: #1c3c9c; }
.abc { font: 8px "Liberation Sans", sans-serif; fill: #1c1c90; stroke: none; }

.sep { width: 2px; height: 16px; margin-top: -3px; background: #f4f4fa; border-right: 1px solid #a2a2b6; flex: none; }
.sep.tall { height: 33px; }

.l0 { margin-left: 0; } .l2 { margin-left: 2px; } .l3 { margin-left: 3px; } .l4 { margin-left: 4px; } .l5 { margin-left: 5px; }
.l6 { margin-left: 6px; } .l7 { margin-left: 7px; } .l9 { margin-left: 9px; } .l10 { margin-left: 10px; } .l12 { margin-left: 12px; }
.l14 { margin-left: 14px; } .l15 { margin-left: 15px; } .l16 { margin-left: 16px; } .l17 { margin-left: 17px; } .l22 { margin-left: 22px; }
.l26 { margin-left: 26px; } .l27 { margin-left: 27px; } .l29 { margin-left: 29px; } .l30 { margin-left: 30px; } .l34 { margin-left: 34px; }
.l43 { margin-left: 43px; } .l87 { margin-left: 87px; } .l111 { margin-left: 111px; }
.r2 { margin-right: 2px; } .r5 { margin-right: 5px; } .r6 { margin-right: 6px; } .r7 { margin-right: 7px; } .r8 { margin-right: 8px; }
.r9 { margin-right: 9px; } .r10 { margin-right: 10px; } .r11 { margin-right: 11px; }
.x-3 { margin-left: -1px; } .x-2 { margin-left: 0; } .x-1 { margin-left: 1px; } .x1 { margin-left: 3px; } .x2 { margin-left: 4px; } .x3 { margin-left: 5px; }
.b2 { margin-left: 4px; }

.workarea { height: 804px; flex: none; display: flex; }
.viewport { flex: 1; position: relative; background: #343164; border-left: 1px solid #8a8a98; overflow: hidden; padding-top: 22px; }
.model { position: absolute; left: -1px; top: 0; width: 1523px; height: 804px; }
.edges { stroke: #0c0c18; stroke-width: 1.700; stroke-dasharray: 40 .5; }
.w { fill: url(#wall); }
.lt { fill: #c6c6ee; }
.dash { stroke-dasharray: 3 1; }
.nostroke { stroke: none; }
.shade { fill: #8a8ab0; }
.hl { fill: #fff; stroke: none; }
.compass { fill: none; stroke: #c9c4ea; stroke-width: 2.400; }
.cfill { fill: #174a68; }
.cball { fill: #c9c4ea; stroke: none; }
.cred { fill: #e0001c; stroke: none; }
.clabel { font: 12px "Liberation Sans", sans-serif; fill: #f5e650; stroke: none; }
.triad { fill: none; stroke: #f0f0f4; stroke-width: 1; }
.triad text { font: 11px "Liberation Sans", sans-serif; fill: #f0f0f4; stroke: none; }

.tree { list-style: none; margin: 0; padding: 0; position: relative; color: #fff; font-size: 16px; }
.tree::before { content: ""; position: absolute; left: 9px; top: 22px; width: 2px; height: 170px; background: #f0f0f6; }
.node { height: 35.500px; display: flex; align-items: center; position: relative; white-space: nowrap; }
.root { padding-left: 3px; }
.rooticon { width: 30px; height: 30px; flex: none; margin-right: 3px; overflow: visible; margin-top: -6px; }
.child { padding-left: 27px; }
.child::before { content: ""; position: absolute; left: 10px; top: 14px; width: 17px; height: 2px; background: #f0f0f6; }
.exp::after { content: "+"; position: absolute; left: 3px; top: 8px; width: 15px; height: 15px; border-radius: 50%; background: #8c8c90; color: #000; font: 700 17px/14px "Liberation Sans", sans-serif; text-align: center; }
.planeicon { width: 29px; height: 29px; flex: none; margin-right: 4px; }
.chk { fill: url(#chk); stroke: none; }

.rightbar { width: 76px; flex: none; display: flex; background: linear-gradient(90deg, #f8f8fe 0, #f4f4fb 3px, #cfd0e8 10px, #cfd0e8 70px, #a8a8b8 76px); position: relative; }
.rcol { display: flex; flex-direction: column; align-items: center; }
.rc1 { width: 38px; }
.rc2 { width: 42px; margin-right: -4px; }
.rcol .ic { margin-left: 0; margin-right: 0; flex: none; }
.hsep { width: 16px; height: 2px; background: #f2f2f8; border-bottom: 1px solid #a2a2b6; flex: none; align-self: flex-start; margin-left: 4px; }
.rc2 .hsep { margin-left: 6px; }
.hsep.full { width: 33px; }
.t2 { margin-top: 2px; } .t3 { margin-top: 3px; } .t4 { margin-top: 4px; } .t5 { margin-top: 5px; } .t6 { margin-top: 6px; } .t7 { margin-top: 7px; }
.t8 { margin-top: 8px; } .t9 { margin-top: 9px; } .t12 { margin-top: 12px; } .t14 { margin-top: 14px; } .t18 { margin-top: 18px; } .t26 { margin-top: 26px; }
.t27 { margin-top: 27px; } .t28 { margin-top: 28px; } .t62 { margin-top: 62px; }

.toolbar-bottom {
  height: 76px; flex: none;
  background: linear-gradient(#fbfbfe 0, #f4f4fb 3px, #cfd0e8 11px, #cbcce4 68px, #b0b0c4 72px, #84848e 75px, #5c5c66 76px);
}
.trow { height: 39px; display: flex; align-items: flex-start; padding-top: 8px; position: relative; }
.trow1 { padding-top: 7px; }
.trow + .trow { height: 37px; }
.combo { height: 21px; margin-top: 2px; background: #fff; border: 1px solid #808088; border-right-color: #eee; border-bottom-color: #eee; flex: none; position: relative; font-size: 11.600px; }
.combo span { display: block; padding-left: 3px; line-height: 20px; white-space: nowrap; color: #222; }
.combo b { position: absolute; right: 0; top: 0; bottom: 0; width: 16px; background: #dcdce8; border: 1px solid #f4f4f8; border-right-color: #888; border-bottom-color: #888; }
.combo b::after { content: ""; position: absolute; left: 3px; top: 7px; border: 4px solid transparent; border-top: 5px solid #000; border-bottom: 0; }
.wbody { width: 161px; }
.wauto1 { width: 62px; }
.wauto1 span { padding-left: 5px; }
.wn { width: 61px; }
.ws { width: 39px; }
.dimmed { background: #dfdfec; }
.dimmed span { color: #8a8a96; }
.dimmed b::after { border-top-color: #888; }
.logo { margin-left: auto; width: 56px; margin-right: 2px; margin-top: -7px; position: relative; height: 38px; }
.logomark { position: absolute; left: 2px; top: 0; width: 36px; height: 27px; }
.logo span { position: absolute; left: 10px; top: 21px; font: italic 700 10px "Liberation Sans", sans-serif; color: #2a2a80; letter-spacing: .2px; }

.statusbar { height: 24px; flex: none; display: flex; align-items: center; background: #cfd0e6; padding-left: 3px; }
.stext { font-size: 11.600px; color: #111; white-space: nowrap; }
.sinput { margin-left: auto; width: 298px; height: 17px; background: #fff; border: 1px solid #888; border-right-color: #eee; border-bottom-color: #eee; margin-right: 2px; padding: 0; }
.sbtn { width: 31px; height: 21px; background: #d4d4e4; border: 1px solid #eee; border-right-color: #999; border-bottom-color: #999; margin-right: 2px; display: block; }
.sbtn svg { display: block; width: 100%; height: 100%; }
```
